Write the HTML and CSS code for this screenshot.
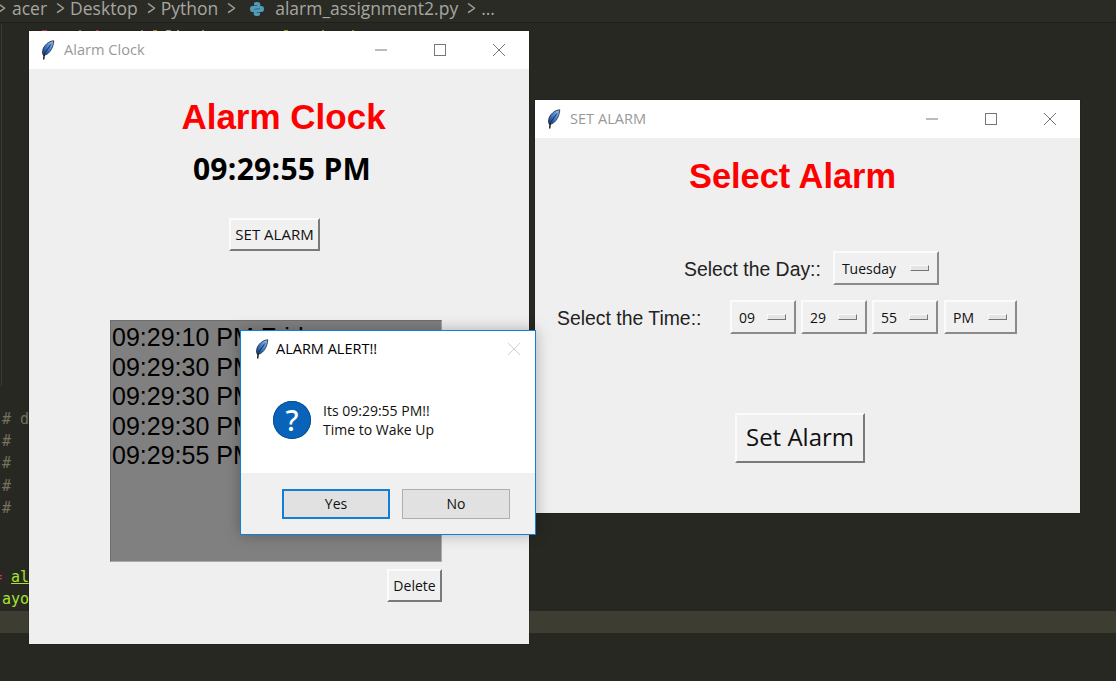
FILE: index.html
```html
<!DOCTYPE html>
<html lang="en">
<head>
<meta charset="utf-8">
<title>Alarm Clock</title>
<link rel="stylesheet" href="styles.css">
</head>
<body>
<svg class="defs" width="0" height="0" aria-hidden="true">
  <defs>
    <linearGradient id="fg" x1="1" y1="0" x2="0" y2="1">
      <stop offset="0" stop-color="#9cc4ee"/>
      <stop offset="0.55" stop-color="#3a78c8"/>
      <stop offset="1" stop-color="#1a3560"/>
    </linearGradient>
    <symbol id="feather" viewBox="0 0 14 20">
      <path d="M12.800.8C8 .8 2.600 5.500 1.700 10.500c-.4 2.200-.1 3.800.8 4.900C7 15 12 10 12.800.8z" fill="url(#fg)" stroke="#17253c" stroke-width=".8"/>
      <path d="M3.200 14.500 2.700 19.500" stroke="#111" stroke-width="1.400" fill="none"/>
      <path d="M9.800 4.500 3.500 13.500" stroke="#0d2140" stroke-width=".8" fill="none"/>
    </symbol>
    <symbol id="winmin" viewBox="0 0 12 12"><path d="M0 6h12" stroke="currentColor" fill="none"/></symbol>
    <symbol id="winmax" viewBox="0 0 12 12"><rect x=".5" y=".5" width="11" height="11" stroke="currentColor" fill="none"/></symbol>
    <symbol id="winclose" viewBox="0 0 12 12"><path d="M0 0l12 12M12 0L0 12" stroke="currentColor" fill="none"/></symbol>
  </defs>
</svg>

<main class="desktop">
  <nav class="crumbs">
    <span class="sep sep-first">&gt;</span>
    <span class="crumb">acer</span><span class="sep">&gt;</span>
    <span class="crumb">Desktop</span><span class="sep">&gt;</span>
    <span class="crumb">Python</span><span class="sep">&gt;</span>
    <svg class="py" viewBox="0 0 16 16" width="16" height="16" aria-hidden="true">
      <path d="M8 1C5 1 5 2.300 5 3v1.500h3.300V5H3.200C1.800 5 1 6.300 1 8s.8 3 2.200 3H5V9.500C5 8.400 5.800 7.700 7 7.700h2.600c1 0 1.700-.7 1.700-1.700V3c0-1.200-1.300-2-3.300-2z" fill="#519aba"/>
      <path d="M8 15c3 0 3-1.300 3-2v-1.500H7.700V11h5.100c1.400 0 2.200-1.300 2.200-3s-.8-3-2.200-3H11v1.500c0 1.100-.8 1.800-2 1.800H6.400c-1 0-1.700.7-1.700 1.700v3c0 1.200 1.300 2 3.300 2z" fill="#519aba"/>
    </svg>
    <span class="crumb file">alarm_assignment2.py</span><span class="sep">&gt;</span>
    <span class="crumb">...</span>
  </nav>

  <div class="guide"></div>
  <div class="peek"></div>
  <pre class="code comments"># d
#
#
#
#</pre>
  <pre class="code calls"><span class="pink">=</span> <span class="under">al</span>
<span class="green">.ayo</span></pre>
  <div class="curline"></div>

  <section class="win win-main">
    <header class="titlebar">
      <svg class="feather"><use href="#feather"/></svg>
      <span class="wtitle">Alarm Clock</span>
      <span class="controls">
        <svg class="ctl"><use href="#winmin"/></svg>
        <svg class="ctl"><use href="#winmax"/></svg>
        <svg class="ctl"><use href="#winclose"/></svg>
      </span>
    </header>
    <div class="main-body">
      <h1 class="heading heading-main">Alarm Clock</h1>
      <div class="clock">09:29:55 PM</div>
      <button class="tk-btn set-btn">SET ALARM</button>
      <div class="listbox">
        <div class="row">09:29:10 PM Friday</div>
        <div class="row">09:29:30 PM Friday</div>
        <div class="row">09:29:30 PM Friday</div>
        <div class="row">09:29:30 PM Friday</div>
        <div class="row">09:29:55 PM Friday</div>
      </div>
      <div class="del-row"><button class="tk-btn del-btn">Delete</button></div>
    </div>
  </section>

  <section class="win win-set">
    <header class="titlebar">
      <svg class="feather"><use href="#feather"/></svg>
      <span class="wtitle">SET ALARM</span>
      <span class="controls">
        <svg class="ctl"><use href="#winmin"/></svg>
        <svg class="ctl"><use href="#winmax"/></svg>
        <svg class="ctl"><use href="#winclose"/></svg>
      </span>
    </header>
    <div class="set-body">
      <h2 class="heading heading-set">Select Alarm</h2>
      <div class="day-row">
        <span class="lbl">Select the Day::</span>
        <span class="opt opt-day">Tuesday<i class="nub"></i></span>
      </div>
      <div class="time-row">
        <span class="lbl lbl-time">Select the Time::</span>
        <span class="opt opt-time">09<i class="nub"></i></span>
        <span class="opt opt-time">29<i class="nub"></i></span>
        <span class="opt opt-time">55<i class="nub"></i></span>
        <span class="opt opt-pm">PM<i class="nub"></i></span>
      </div>
      <button class="tk-btn big-btn">Set Alarm</button>
    </div>
  </section>

  <section class="dialog">
    <header class="dlg-title">
      <svg class="feather"><use href="#feather"/></svg>
      <span class="dlg-name">ALARM ALERT!!</span>
      <svg class="ctl dlg-x"><use href="#winclose"/></svg>
    </header>
    <div class="dlg-msg">
      <span class="qicon">?</span>
      <p class="dlg-text">Its 09:29:55 PM!!<br>Time to Wake Up</p>
    </div>
    <footer class="dlg-foot">
      <button class="dlg-btn dlg-yes">Yes</button>
      <button class="dlg-btn">No</button>
    </footer>
  </section>
</main>
</body>
</html>
```
FILE: styles.css
```css
* { box-sizing: border-box; }
html, body { margin: 0; padding: 0; }
body { width: 1116px; height: 681px; overflow: hidden; background: #272822; }
.defs { position: absolute; }
.desktop { position: relative; width: 1116px; height: 681px; overflow: hidden; background: #272822; }

.crumbs {
  height: 23px; display: flex; align-items: center; padding: 0 0 5px 0;
  background: #2b2b25; border-bottom: 1px solid #1f1f1b;
  font: 17.500px/17px "Open Sans", "Noto Sans", sans-serif; color: #a6a6a0; white-space: nowrap;
}
.sep { font-size: 21px; line-height: 17px; color: #a6a6a0; transform: scaleX(.7); margin: 0 5px 0 9px; width: 9px; display: flex; justify-content: center; }
.sep-first { margin: 0 6px 0 -3px; }
.py { margin: 0 10px 0 8px; }

.guide { position: absolute; left: 1px; top: 24px; width: 1px; height: 362px; background: #3a3a33; }
.peek {
  position: absolute; left: 30px; top: 30px; width: 340px; height: 1px;
  background: linear-gradient(90deg,
    transparent 12px, #d0356f 12px, #d0356f 17px, transparent 17px,
    transparent 49px, #8a8fa0 49px, #8a8fa0 51px, transparent 51px,
    transparent 66px, #d0356f 66px, #d0356f 69px, transparent 69px,
    transparent 111px, #b5803a 111px, #b5803a 113px, transparent 113px,
    transparent 123px, #d08a2a 123px, #d08a2a 127px, transparent 127px,
    transparent 136px, #b5b5ad 136px, #b5b5ad 141px, transparent 141px,
    transparent 147px, #b5b5ad 147px, #b5b5ad 149px, transparent 149px,
    transparent 172px, #a0a0a0 172px, #a0a0a0 174px, transparent 174px,
    transparent 254px, #8fbf2a 254px, #8fbf2a 258px, transparent 258px,
    transparent 292px, #8fbf2a 292px, #8fbf2a 294px, transparent 294px,
    transparent 322px, #c09a30 322px, #c09a30 324px, transparent 324px);
}
.code { position: absolute; margin: 0; font: 15px/22.200px "DejaVu Sans Mono", monospace; }
.comments { left: 2px; top: 408px; color: #75715e; }
.calls { left: -7px; top: 566px; color: #a6e22e; }
.pink { color: #f92672; }
.under { text-decoration: underline; }
.green { color: #a6e22e; }
.curline { position: absolute; left: 0; right: 0; top: 611px; height: 22px; background: #3e3d32; }

.win { position: absolute; background: #efefef; box-shadow: 0 0 1px #111; font-family: "Liberation Sans", Arial, sans-serif; }
.win-main { left: 29px; top: 31px; width: 500px; height: 613px; }
.win-set { left: 535px; top: 100px; width: 545px; height: 413px; }

.titlebar { height: 38px; background: #fff; display: flex; align-items: center; padding-left: 12px; }
.feather { width: 14px; height: 20px; flex: none; }
.wtitle { margin-left: 9px; padding-bottom: 2px; font: 14.600px "Open Sans", "Noto Sans", sans-serif; color: #999; }
.controls { margin-left: auto; display: flex; gap: 47px; padding-right: 24px; color: #777; }
.ctl { width: 12px; height: 12px; display: block; }

.main-body { display: flex; flex-direction: column; align-items: center; padding-top: 28px; }
.heading { margin: 0; color: #f00; font-family: "Liberation Sans", Arial, sans-serif; font-weight: 700; font-size: 35px; line-height: 40px; }
.heading-main { margin-left: 9px; }
.clock { margin-top: 10px; margin-left: 6px; height: 42px; font: 700 30px/43px "Open Sans", "Noto Sans", sans-serif; letter-spacing: .3px; color: #000; }

.tk-btn {
  display: block; padding: 0; background: #f0f0f0; color: #111; white-space: nowrap;
  border: 2px solid; border-color: #fbfbfb #7a7a7a #7a7a7a #fbfbfb;
  font-family: "Open Sans", "Noto Sans", sans-serif; text-align: center;
}
.set-btn { width: 91px; height: 33px; margin-top: 29px; margin-left: -9px; padding-bottom: 2px; font-size: 15px; }
.listbox {
  width: 332px; height: 242px; margin-top: 69px; margin-left: -6px; overflow: hidden; background: #808080;
  border: 1px solid #6e6e6e; border-right-color: #aaa; border-bottom-color: #aaa; padding: 2px 0 0 1px;
  font: 25px/29.500px "Liberation Sans", Arial, sans-serif; color: #000;
}
.row { white-space: nowrap; }
.del-row { width: 332px; margin-top: 7px; margin-left: -6px; display: flex; justify-content: flex-end; }
.del-btn { width: 55px; height: 33px; font-size: 14px; }

.set-body { display: flex; flex-direction: column; padding-top: 18px; }
.heading-set { text-align: center; margin-right: 30px; font-size: 34.400px; }
.day-row { display: flex; align-items: center; margin-top: 54px; padding-left: 149px; height: 36px; }
.time-row { display: flex; align-items: center; margin-top: 13px; padding-left: 22px; height: 36px; }
.lbl { padding-top: 2px; font: 19.400px/24px "Liberation Sans", Arial, sans-serif; color: #222; }
.lbl-time { width: 173px; }
.opt {
  display: flex; align-items: center; height: 34px; padding-left: 7px;
  background: #f0f0f0; border: 2px solid; border-color: #fbfbfb #8a8a8a #8a8a8a #fbfbfb;
  font: 14px "Open Sans", "Noto Sans", sans-serif; color: #111; position: relative;
}
.opt-day { width: 106px; margin-left: 12px; }
.opt-time { width: 66px; margin-right: 5px; }
.opt-pm { width: 73px; margin-left: 1px; }
.nub {
  position: absolute; right: 8px; top: 12px; width: 19px; height: 6px;
  background: #e4e4e4; border: 1px solid; border-color: #fafafa #777 #777 #fafafa;
}
.big-btn { width: 130px; height: 50px; margin-top: 78px; margin-left: 200px; padding-bottom: 4px; font-size: 24px; }

.dialog {
  position: absolute; left: 240px; top: 330px; width: 296px; height: 205px;
  background: #fff; border: 1px solid #0f7fd8; box-shadow: 0 0 14px rgba(0,0,0,.28);
  display: flex; flex-direction: column; font-family: "Open Sans", "Noto Sans", sans-serif; color: #111;
}
.dlg-title { height: 35px; display: flex; align-items: center; padding-left: 14px; flex: none; }
.dlg-name { margin-left: 7px; font-size: 14.500px; color: #000; }
.dlg-x { margin-left: auto; margin-right: 15px; color: #cfcfcf; }
.dlg-msg { flex: 1; display: flex; align-items: center; padding-left: 32px; padding-bottom: 0; }
.qicon {
  width: 38px; height: 38px; border-radius: 50%; background: #0863b9; color: #fff; flex: none;
  display: flex; align-items: center; justify-content: center;
  font: 500 29px/38px "Noto Sans", "Open Sans", sans-serif; box-shadow: inset 0 0 0 1px #0a4f92;
}
.dlg-text { margin: 0 0 0 12px; font-size: 14px; line-height: 19px; }
.dlg-foot { height: 61px; flex: none; background: #f0f0f0; display: flex; gap: 12px; padding: 16px 0 0 41px; }
.dlg-btn {
  width: 108px; height: 30px; padding: 0 0 2px; background: #e1e1e1; border: 1px solid #adadad; color: #111;
  font: 14px "Open Sans", "Noto Sans", sans-serif;
}
.dlg-yes { border: 2px solid #0f7fd8; }
```
